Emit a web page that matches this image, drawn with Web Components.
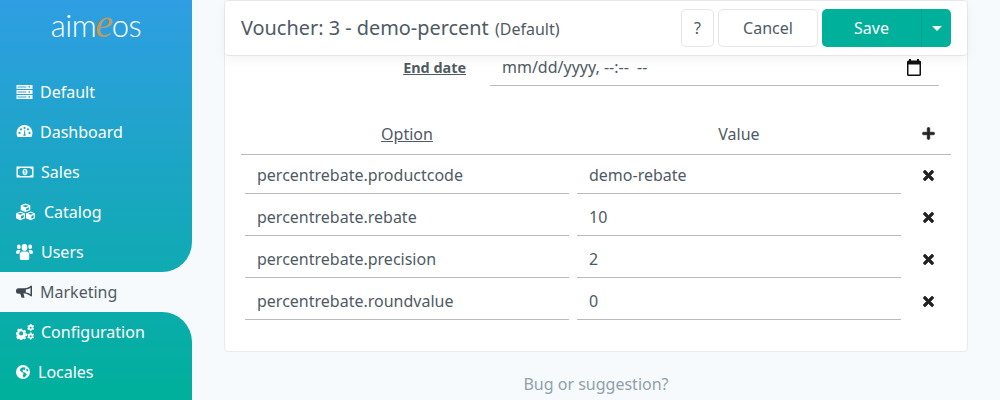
<!DOCTYPE html>
<html lang="en">
<head>
<meta charset="utf-8">
<title>Voucher</title>
<style>
  html, body { margin: 0; height: 100%; overflow: hidden; }
  body { background: #f7fafc; color: #505a64; font: 16px/24px "Noto Sans", "Open Sans", sans-serif; }
  small { font-size: 16px; margin-left: 1px; }
</style>
</head>
<body>
<template id="icons">
  <svg viewBox="0 0 16 16" data-name="server"><path fill="currentColor" d="M0 1h16v4H0zM0 6h16v4H0zM0 11h16v4H0z"/><path fill="#2ba0da" d="M1 2.500h9v1H1zM12 2h1.500v1.500H12zM1 7.500h9v1H1zM12 7.200h1.500v1.500H12zM1 12.500h9v1H1zM12 12.200h1.500v1.500H12z"/></svg>
  <svg viewBox="0 1 16 16" data-name="gauge"><path fill="currentColor" fill-rule="evenodd" d="M8 2a8 8 0 0 0-8 8c0 1.500.4 2.900 1.100 4h13.800A8 8 0 0 0 8 2zM3 11a1.100 1.100 0 1 1 0-2.200A1.100 1.100 0 0 1 3 11zm1.500-3.600a1.100 1.100 0 1 1 0-2.200 1.100 1.100 0 0 1 0 2.200zM8 6a1.100 1.100 0 1 1 0-2.200A1.100 1.100 0 0 1 8 6zm1.200 6.800H6.800a1.500 1.500 0 0 1 .7-1.600l.3-4 .8-.1.200 4.100a1.500 1.500 0 0 1 .4 1.600zM11.500 7.400a1.100 1.100 0 1 1 0-2.200 1.100 1.100 0 0 1 0 2.200zM13 11a1.100 1.100 0 1 1 0-2.200 1.100 1.100 0 0 1 0 2.200z"/></svg>
  <svg viewBox="0 0 17 16" data-name="money"><path fill="currentColor" fill-rule="evenodd" d="M0 2.500h17v11H0zM1.500 5v6a2 2 0 0 1 2 1h10a2 2 0 0 1 2-1V5a2 2 0 0 1-2-1h-10a2 2 0 0 1-2 1zM8.500 4.800c1.500 0 2.500 1.400 2.500 3.200s-1 3.200-2.500 3.200S6 9.800 6 8s1-3.200 2.500-3.200zM7.500 6.500v.8h.6V10h.9V5.900h-.7z"/></svg>
  <svg viewBox="0 0 20 18" data-name="cubes"><path fill="currentColor" fill-rule="evenodd" d="M10 0l5 2v5l-5 2-5-2V2zM6.500 2.700L10 4l3.500-1.300L10 1.500zM10.600 5.200v2.300l3-1.200V4zM4.500 8.500l5 2v5l-5 2.300-4.500-2.300v-5zM1.500 10.800l3 1.200 3-1.200-3-1.100zM5.200 13.300v2.700l3-1.300v-2.500zM15.500 8.500l4.500 2v5l-4.500 2.300-5-2.300v-5zM12.500 10.800l3 1.200 3-1.200-3-1.100zM16.200 13.300v2.700l2.500-1.300v-2.500z"/></svg>
  <svg viewBox="0 1.500 18 14" preserveAspectRatio="none" data-name="users"><path fill="currentColor" d="M3 2a2 2 0 1 1 0 4 2 2 0 0 1 0-4zM15 2a2 2 0 1 1 0 4 2 2 0 0 1 0-4zM9 1.500a3 3 0 1 1 0 6 3 3 0 0 1 0-6zM0 9.200C0 7.700 1 6.800 2.200 6.800h1.500c.3 0 .7.100 1 .3A3.700 3.700 0 0 0 3.600 10H1a1 1 0 0 1-1-.8zM14.300 10a3.700 3.700 0 0 0-1-2.900c.3-.2.600-.3 1-.3h1.500C17 6.800 18 7.700 18 9.200a1 1 0 0 1-1 .8zM6.500 8h5c1.500 0 2.500 1.200 2.500 2.700v3.300A1.500 1.500 0 0 1 12.500 15.500h-7A1.500 1.500 0 0 1 4 14v-3.300C4 9.200 5 8 6.500 8z"/></svg>
  <svg viewBox="0 0 16 16" data-name="bullhorn"><path fill="currentColor" fill-rule="evenodd" d="M15 1.500a1 1 0 0 1 1 1v9a1 1 0 0 1-1 1c-2-1.800-4-2.800-6.500-3v-.2H7.500l1 4.500H5.600L4.300 9.800H2.500A2.500 2.500 0 0 1 0 7.300v-.6a2.500 2.500 0 0 1 2.500-2.500h6C11 4 13 3.300 15 1.500zM14.500 3.800c-1.500 1.100-3 1.600-4.700 1.800v2.800c1.700.2 3.200.7 4.700 1.800z"/></svg>
  <svg viewBox="0 0 18 16" data-name="cogs"><g transform="translate(0 2.200) scale(.82)"><path fill="currentColor" fill-rule="evenodd" d="M5 3h2.500l.4 1.700 1.100.5 1.500-.9 1.700 1.800-.9 1.500.5 1 1.700.5v2.400l-1.700.5-.5 1.100.9 1.500-1.700 1.700-1.500-.9-1.100.5-.4 1.500H5l-.4-1.500-1.100-.5-1.500.9L.3 13.200l.9-1.500-.5-1.100L0 10V7.600l1.700-.5.500-1-.9-1.500L3 2.800l1.500.9zM6.300 6.300a2.500 2.500 0 1 0 0 5 2.500 2.500 0 0 0 0-5z"/></g><path fill="currentColor" fill-rule="evenodd" d="M14 0h1.500l.2 1 .9.500 1-.4.400 1.400-.8.600v1l.8.600-.7 1.300-1-.4-.8.500-.2 1H14l-.2-1-.8-.5-1 .4-.7-1.300.8-.6v-1l-.8-.6.700-1.300 1 .4.800-.5zM14.700 2.700a1 1 0 1 0 0 2 1 1 0 0 0 0-2zM14 8.500h1.500l.2 1 .9.500 1-.4.400 1.400-.8.600v1l.8.600-.7 1.300-1-.4-.8.500-.2 1H14l-.2-1-.8-.5-1 .4-.7-1.300.8-.6v-1l-.8-.6.700-1.300 1 .4.800-.5zM14.700 11.200a1 1 0 1 0 0 2 1 1 0 0 0 0-2z"/></svg>
  <svg viewBox="1 1 14 14" data-name="globe"><path fill="currentColor" fill-rule="evenodd" d="M8 1a7 7 0 1 1 0 14A7 7 0 0 1 8 1zM5.500 4.500L4.800 6.500l2 1.800 1.200.2.500 1.500-.8 1.500.8 2 1.500-.5 2-3-2.500-1.500-1.500-.5-.5-1.500 1-1 1 .5 1-.5-.5-2-2.500-.2zM12 4.500l-1 1.500 1.500 1.500 1-.5A5 5 0 0 0 12 4.500z"/></svg>
  <svg viewBox="0 0 16 17" data-name="calendar"><path fill="currentColor" fill-rule="evenodd" d="M3 0h2v1.500h6V0h2v1.500h.5A1.500 1.500 0 0 1 15 3v12.500a1.500 1.500 0 0 1-1.500 1.500h-11A1.500 1.500 0 0 1 1 15.500V3a1.500 1.500 0 0 1 1.500-1.500H3zM2.500 5.500v10h11v-10z"/></svg>
  <svg viewBox="-20 12 488 488" data-name="plus"><path stroke="currentColor" stroke-width="24" fill="currentColor" d="M416 208H272V64c0-17.670-14.330-32-32-32h-32c-17.670 0-32 14.330-32 32v144H32c-17.670 0-32 14.330-32 32v32c0 17.670 14.330 32 32 32h144v144c0 17.670 14.330 32 32 32h32c17.670 0 32-14.330 32-32V304h144c17.670 0 32-14.330 32-32v-32c0-17.670-14.330-32-32-32z"/></svg>
  <svg viewBox="-10 70 372 372" data-name="times"><path stroke="currentColor" stroke-width="24" fill="currentColor" d="M242.720 256l100.070-100.070c12.280-12.280 12.280-32.190 0-44.480l-22.240-22.240c-12.280-12.280-32.190-12.280-44.480 0L176 189.280 75.930 89.210c-12.280-12.280-32.190-12.280-44.480 0L9.210 111.450c-12.280 12.280-12.280 32.190 0 44.480L109.280 256 9.210 356.070c-12.280 12.280-12.280 32.190 0 44.480l22.240 22.240c12.280 12.280 32.200 12.280 44.480 0L176 322.720l100.070 100.070c12.280 12.280 32.200 12.280 44.480 0l22.240-22.240c12.280-12.280 12.280-32.190 0-44.480L242.720 256z"/></svg>
</template>

<admin-page>
  <admin-nav slot="nav">
    <nav-group slot="top">
      <nav-item icon="server" width="17">Default</nav-item>
      <nav-item icon="gauge" width="17">Dashboard</nav-item>
      <nav-item icon="money" width="18" gap="7">Sales</nav-item>
      <nav-item icon="cubes" width="19" height="18" gap="9">Catalog</nav-item>
      <nav-item icon="users" width="17" height="16" gap="8">Users</nav-item>
    </nav-group>
    <nav-item slot="active" icon="bullhorn" width="16" gap="8">Marketing</nav-item>
    <nav-group slot="bottom" class="lower">
      <nav-item icon="cogs" width="18" gap="7">Configuration</nav-item>
      <nav-item icon="globe" width="14" gap="8">Locales</nav-item>
    </nav-group>
  </admin-nav>

  <item-card>
    <span slot="title">Voucher: 3 - demo-percent <small>(Default)</small></span>
    <date-row label="End date" value="mm/dd/yyyy," time="--:-- --"></date-row>
    <config-table>
      <config-row key="percentrebate.productcode" value="demo-rebate"></config-row>
      <config-row key="percentrebate.rebate" value="10"></config-row>
      <config-row key="percentrebate.precision" value="2"></config-row>
      <config-row key="percentrebate.roundvalue" value="0"></config-row>
    </config-table>
  </item-card>
  <page-footer slot="footer">Bug or suggestion?</page-footer>
</admin-page>

<script>
;(function () {
  "use strict"

  const iconSource = document.getElementById("icons").content

  function iconMarkup(name) {
    return iconSource.querySelector(`svg[data-name="${name}"]`).outerHTML
  }

  class BaseElement extends HTMLElement {
    constructor() {
      super()
      this.attachShadow({ mode: "open" })
    }
    connectedCallback() {
      this.shadowRoot.innerHTML = this.render()
    }
  }

  class AdminPage extends BaseElement {
    render() {
      return `<style>
        :host { display: flex; height: 400px; overflow: hidden; }
        .side { flex: 0 0 192px; }
        main { flex: 1; min-width: 0; padding: 0 32px; }
      </style>
      <div class="side"><slot name="nav"></slot></div>
      <main><slot></slot><slot name="footer"></slot></main>`
    }
  }

  class AdminNav extends BaseElement {
    render() {
      return `<style>
        :host { display: flex; flex-direction: column; height: 400px; }
        .logo {
          display: block; height: 72px; box-sizing: border-box; padding-top: 4px;
          text-align: center; color: #fff; font: 300 31px/40px Lato, "Noto Sans", sans-serif;
          letter-spacing: -0.4px;
          background: linear-gradient(180deg, #2f9ee3 0, #00b09b 400px) 0 0 / 100% 400px no-repeat;
          background-attachment: fixed;
        }
        .logo i { font: italic 40px/40px "Liberation Serif", serif; color: #bd9a5f; margin: 0 -1px; }
        ::slotted([slot="bottom"]) { flex: 1; }
      </style>
      <div class="logo">aim<i>e</i>os</div>
      <slot name="top"></slot><slot name="active"></slot><slot name="bottom"></slot>`
    }
  }

  class NavGroup extends BaseElement {
    render() {
      return `<style>
        :host {
          display: block;
          background: linear-gradient(180deg, #2f9ee3 0, #00b09b 400px) 0 0 / 100% 400px no-repeat;
          background-attachment: fixed;
          border-bottom-right-radius: 30px;
        }
        :host(.lower) { border-bottom-right-radius: 0; border-top-right-radius: 30px; }
      </style><slot></slot>`
    }
  }

  class NavItem extends BaseElement {
    render() {
      const width = this.getAttribute("width") || 16
      const height = this.getAttribute("height") || 16
      const gap = this.getAttribute("gap") || 7
      return `<style>
        :host {
          display: flex; align-items: center; height: 40px; padding-left: 16px;
          color: #fff; font-size: 16px; line-height: 24px;
        }
        :host([slot="active"]) { color: #505a64; }
        :host([slot="active"]) svg { color: #3f4750; }
        svg { display: block; width: ${width}px; height: ${height}px; margin-right: ${gap}px; flex: none; }
      </style>${iconMarkup(this.getAttribute("icon"))}<slot></slot>`
    }
  }

  class ItemCard extends BaseElement {
    render() {
      return `<style>
        :host {
          display: block; box-sizing: border-box; height: 352px; background: #fff;
          border: 1px solid #e8eaed; border-radius: 4px;
        }
        header {
          display: flex; align-items: center; height: 55px; box-sizing: border-box;
          padding: 0 16px; background: #fff; border-bottom: 1px solid #e4e6e9;
          border-radius: 4px; box-shadow: 0 4px 12px rgba(0, 0, 0, .05);
          position: relative;
        }
        .title { flex: 1; font-size: 19.900px; color: #505a64; white-space: nowrap; }
        .actions { display: flex; gap: 4px; }
        button {
          height: 38px; box-sizing: border-box; padding: 0; font: inherit; font-size: 16px;
          color: #505a64; background: #fff; border: 1px solid #e4e6e9; border-radius: 5px;
        }
        .help { width: 33px; }
        .cancel { width: 100px; }
        .split { display: flex; }
        .save { width: 99px; color: #fff; background: #00b09b; border: 0; border-radius: 5px 0 0 5px; }
        .caret {
          width: 30px; background: #00b09b; border: 0; border-left: 1px solid #009f8c;
          border-radius: 0 5px 5px 0; display: flex; align-items: center; justify-content: center;
        }
        .caret b {
          width: 0; height: 0; border: 5px solid transparent; border-top-color: #fff;
          border-bottom: 0;
        }
        .body { padding: 0 16px; }
      </style>
      <header>
        <div class="title"><slot name="title"></slot></div>
        <div class="actions">
          <button class="help">?</button>
          <button class="cancel">Cancel</button>
          <div class="split"><button class="save">Save</button><button class="caret"><b></b></button></div>
        </div>
      </header>
      <div class="body"><slot></slot></div>`
    }
  }

  class DateRow extends BaseElement {
    render() {
      return `<style>
        :host {
          display: grid; grid-template-columns: 225px 449px; column-gap: 24px;
          height: 30px; align-items: start;
        }
        label {
          display: block; text-align: right; font-size: 14.400px; font-weight: 700; line-height: 24px;
          text-decoration: underline;
        }
        .field {
          display: flex; justify-content: space-between; align-items: flex-start;
          height: 29px; padding: 0 17px 0 12px; border-bottom: 1px solid #bbb; line-height: 22px;
        }
        .time { word-spacing: 4px; }
        svg { width: 16px; height: 17px; color: #111; display: block; margin-top: 3px; }
      </style>
      <label>${this.getAttribute("label")}</label>
      <div class="field"><span>${this.getAttribute("value")} <span class="time">${this.getAttribute("time")}</span></span>${iconMarkup("calendar")}</div>`
    }
  }

  class ConfigTable extends BaseElement {
    render() {
      return `<style>
        :host { display: block; margin-top: 29px; }
        .head {
          display: grid; grid-template-columns: 332px 332px 46px; align-items: center;
          height: 39px; text-align: center; border-bottom: 1px solid #bbb; line-height: 22px;
        }
        .head div { padding-bottom: 2px; }
        u { text-decoration: underline; }
        svg { width: 13px; height: 13px; color: #222; display: block; margin: 0 auto; }
      </style>
      <div class="head"><div><u>Option</u></div><div>Value</div><div>${iconMarkup("plus")}</div></div>
      <slot></slot>`
    }
  }

  class ConfigRow extends BaseElement {
    render() {
      return `<style>
        :host { display: grid; grid-template-columns: 332px 332px 46px; height: 42px; }
        .cell { padding: 0 4px; }
        .cell span {
          display: block; height: 39px; box-sizing: border-box; line-height: 40px;
          border-bottom: 1px solid #bbb; white-space: nowrap; padding-left: 12px;
        }
        .del { display: flex; align-items: center; justify-content: center; padding-bottom: 2px; }
        svg { width: 11px; height: 11px; color: #222; display: block; }
      </style>
      <div class="cell"><span>${this.getAttribute("key")}</span></div>
      <div class="cell"><span>${this.getAttribute("value")}</span></div>
      <div class="del">${iconMarkup("times")}</div>`
    }
  }

  class PageFooter extends BaseElement {
    render() {
      return `<style>
        :host { display: block; margin-top: 20px; text-align: center; color: #8fa1ad; }
      </style><slot></slot>`
    }
  }

  customElements.define("admin-page", AdminPage)
  customElements.define("admin-nav", AdminNav)
  customElements.define("nav-group", NavGroup)
  customElements.define("nav-item", NavItem)
  customElements.define("item-card", ItemCard)
  customElements.define("date-row", DateRow)
  customElements.define("config-table", ConfigTable)
  customElements.define("config-row", ConfigRow)
  customElements.define("page-footer", PageFooter)
})()
</script>
</body>
</html>
